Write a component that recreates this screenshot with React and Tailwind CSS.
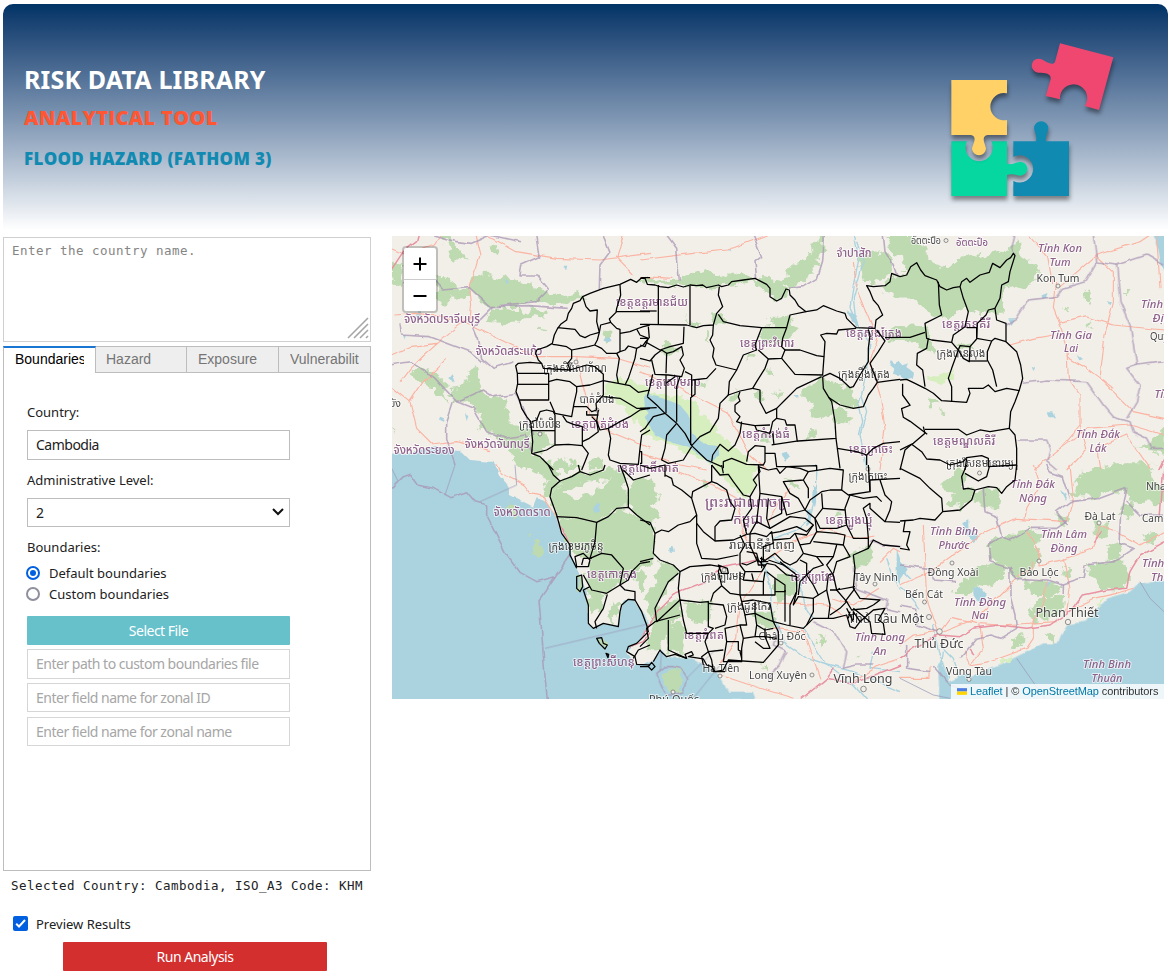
import React from 'react';

// Every map sector is drawn in its own coordinate space, about three units to a pixel.
const sectors = [
  {
    at: 'translate(390 235) scale(.33333)',
    sea: ['M0 656L60 655 100 645 140 640 210 645 240 675 290 680 330 710H0Z'],
    forest: [
      'M0 75L40 95 40 165 0 130Z',
      'M140 125L180 135 210 160 240 165 240 185 190 188 160 210 138 195Z',
      'M240 125L290 110 330 125 370 130 430 160 475 170 520 180 560 175 585 185 550 203 510 208 440 203 380 215 300 220 265 200 270 180 245 165Z',
      'M300 228L350 222 400 230 445 220 475 230 465 245 430 240 390 262 340 265 290 260Z',
      'M205 450L240 430 230 405 262 390 270 410 262 440 275 465 300 490 340 485 350 500 360 560 400 575 420 595 430 655 470 680 490 705H400L370 680 365 640 320 620 290 590 260 575 275 540 240 505 200 500 180 480Z',
      'M55 420L85 395 120 405 180 455 160 465 175 500 150 480 110 445 75 435Z',
      'M425 590L460 590 495 630 460 645 428 655Z',
      'M500 670L540 675 570 705H480Z',
      'M590 680L640 665 650 700H600Z',
      'M150 0H170L240 80 210 70 190 80 175 40Z',
      'M445 278l25 3 5 8 -25 -3Z', 'M640 295l20 -5 8 20 -20 10Z', 'M300 35l20 -5 8 18 -12 6Z', 'M5 580l14 6 -4 12Z',
    ],
    plain: ['M650 450L690 425 760 450 780 440V560L755 590 740 560 700 520 660 490 640 475Z'],
    lake: ['M762 485L780 475V540L765 520Z', 'M640 315l15 -10 8 10 -15 10Z', 'M175 430l10 -12 10 25Z', 'M75 245l18 -18 0 20Z', 'M150 545l12 5 -3 10 -12 -5Z', 'M340 130l14 10 -8 8Z', 'M225 535l10 5 -5 15Z', 'M40 300l10 2 -3 14Z', 'M520 92l12 0 -4 14Z', 'M565 485l10 -5 2 10Z'],
    road: ['M0 40L50 60 130 30 150 0', 'M255 0L270 60 260 95 238 150 245 210 240 250', 'M290 0L380 50 500 70 630 75 780 55', 'M10 240L80 235 160 245 245 270 360 325 440 365 560 365 680 370 780 400', 'M0 360L60 335 140 325 200 275 240 245', 'M140 325L100 360 60 400 30 440', 'M0 450L60 500 80 580 130 630 200 620 300 650', 'M60 500L100 440 170 370', 'M560 365L570 420 590 490 600 540 660 590 780 640', 'M700 0L680 70 730 120'],
    motorway: ['M0 110L40 50 80 20 85 0'],
    admin: ['M130 0L200 20 245 25 300 0 390 20', 'M40 140L120 120 160 165 238 158 300 215 420 212 530 220', 'M440 0L450 65 395 90 390 120 440 120 475 165 440 200 330 212', 'M640 0L660 50 630 90 628 160', 'M310 215L250 275 265 310 275 370 310 400 370 380', 'M30 265L35 300 120 305 160 320 240 350 275 380', 'M0 390L60 380 130 425 200 500 280 465 310 485 380 475', 'M190 500L170 560 170 610 195 690', 'M200 500L250 520 290 590 350 610 405 600 425 650', 'M380 475L410 545 428 600'],
    dist: [
      'M780 128L755 128 740 142 722 133 690 148 640 160 600 175 578 185 570 197 550 205 545 220 535 235 530 255 512 268 503 280 493 300 487 325 470 335 440 345 437 355 445 375 455 385 420 382 385 385 377 392 382 415 383 445 378 470 388 495 395 520 410 545 422 560 425 590 428 620 425 655 450 665 475 690 490 705',
      'M578 185L588 215 600 228 622 225 620 260 628 292 600 300 585 308 570 302 555 283 503 278',
      'M690 150L692 180 680 220 678 232 658 252 662 262 632 270 628 292', 'M678 230H780', 'M662 262L680 280 690 283V350', 'M780 270L760 275 740 282 720 290 690 295',
      'M740 282L750 300 775 310 760 330 740 340 735 370 715 430 705 450', 'M628 292L622 315 614 330 595 335 570 340 545 345 530 335 500 330 487 328', 'M614 330L635 340 650 355 680 355 690 350 705 345 715 333 740 340', 'M680 355L688 370 685 390 680 420 685 445', 'M545 345V370L533 385 540 405 590 390 615 395 640 418V480L618 505 620 525 605 530 590 515 550 515',
      'M455 385L460 400 540 405', 'M382 415H476V495H390', 'M383 448H476', 'M476 440L500 433 540 440 560 455 560 470 552 505 545 545 495 535 480 500', 'M560 455L600 450 640 437 685 445 720 452 745 472 780 465', 'M590 528V540H625', 'M425 560L440 555 450 530 470 525 490 530 495 540V630L470 645 430 655', 'M425 587H495', 'M495 630L535 628 577 632 577 575 550 568 530 560 518 542', 'M577 620L598 610 625 590 620 560 605 545', 'M625 525L620 560 630 585 655 580 690 560 720 545 750 525 780 520', 'M655 580L662 610 655 660 660 675 690 685 745 688 750 640 755 600 780 585', 'M577 632L595 655 585 680 575 705', 'M640 485L690 490 740 520 780 520',
    ],
  },
  {
    at: 'translate(640 235) scale(.33333)',
    sea: [],
    forest: [
      'M-10 135L15 125 60 135 120 130 160 115 200 100 230 130 270 115 350 130 420 140 440 165 430 190 405 198 385 175 340 140 200 160 30 148 -10 138Z',
      'M445 100L470 85 500 70 520 20 550 0V40L535 90 500 130 450 160 420 140 450 130Z',
      'M390 250L450 240 470 285 440 320 380 325 355 310 365 280 400 275Z',
      'M490 460L545 430 600 445 640 470 650 500 640 520 600 515 580 500 578 520 620 530 640 550 620 565 590 575 580 540 530 550 510 540 515 500 490 490Z',
      'M55 345L80 320 100 335 125 345 80 365Z',
      'M140 240L150 262 180 268 150 275Z', 'M265 480L295 465 305 490 270 500Z', 'M215 240L240 235 260 265 225 265Z', 'M165 440L200 440 190 460 165 455Z', 'M340 475L365 465 375 500 360 510Z', 'M330 350L345 360 325 380Z', 'M400 475l25 -6 6 10 -25 8Z', 'M505 590l25 -5 -5 20 -18 15Z', 'M195 290l12 5 0 25 -10 -5Z', 'M385 405l14 2 -8 14Z', 'M365 600l30 5 -5 12 -30 -4Z',
    ],
    plain: ['M-5 465L60 480 120 490 150 495 200 550 240 590 280 640 310 660 330 705H240L200 680 100 630 20 600 -5 560Z'],
    lake: ['M15 478L70 490 120 510 145 540 160 600 190 625 235 630 238 660 210 685 165 650 150 640 100 625 50 600 10 550 30 530Z', 'M752 375l12 10 14 -8 12 14 18 -6 -6 14 20 14 -4 16 -26 4 -14 -12 -22 -4 4 -16 -12 -10Z', 'M425 655l15 -5 10 20 -12 10Z', 'M260 45l12 -4 2 8Z', 'M620 225l30 20 10 30 -20 -10Z', 'M460 480l12 0 0 10Z'],
    road: ['M0 75L160 55 260 45 380 0', 'M0 410L80 440 180 490 260 530 300 600 330 660 380 705', 'M0 655L120 690 200 705', 'M640 80L650 160 690 260 710 310 690 380 720 480 735 580 720 705', 'M0 125L100 130'],
    motorway: [],
    river: ['M640 0L655 80 640 150 630 220 660 280 690 320 680 400 665 480 680 530 660 600 680 700', 'M650 20L670 80 640 190 650 280', 'M665 480L655 510 665 560 655 600'],
    admin: ['M550 0L545 80 530 130 490 155 450 160', 'M80 0L110 40 118 140', 'M340 0L365 65 345 80 350 130', 'M730 0L735 50 760 90 770 120'],
    dist: [
      'M0 130L15 130 22 148 45 150 60 155 85 158 110 150 130 156 150 150 170 152 188 150 200 158 235 150 245 155 265 150 275 140 310 135 345 130 380 148 390 160 390 185 410 198 425 190 438 162 448 165 450 180 465 195 475 212 498 230 530 225 550 212 590 228 615 235 620 250 648 278 705 280 708 255 728 240 715 212 700 195 690 170 680 152 700 155 735 152 750 140 755 115 780 125',
      'M55 150V268', 'M150 152V270', 'M0 268L140 270 170 278 190 272 220 270 230 235 248 215 235 180 238 155', 'M0 228H50', 'M235 238L250 260 300 272 365 278 440 278 450 240 498 230', 'M220 270L218 300 210 315 222 340 218 365 228 390 290 405 310 360 350 345 345 330 365 278', 'M440 278L428 310 425 335 435 345 425 370 385 372 355 345', 'M435 345L480 345 530 362 552 365 548 420 465 418 450 400 425 370', 'M552 365L555 320 542 300 560 295 590 297 595 285 648 280', 'M385 372L375 400 350 440 338 460 360 465 360 500 378 535 410 520 435 495 470 460 545 425', 'M290 405L268 440 265 480 300 468 338 460', 'M265 480L240 505 235 550 210 590 180 605 155 632', 'M300 470L295 485 300 498 285 510 285 530 300 545 290 560 305 565 345 572 390 570', 'M548 425L550 460 565 485 575 500 585 560 588 610 475 618 395 630', 'M548 425L570 415 600 430 630 458 640 455 660 420 685 380 685 340 690 300 685 283', 'M565 487L600 510 640 520 670 515 685 480 700 460 712 442 690 385 715 350 735 318 710 285', 'M735 308L780 307', 'M712 442L750 437 780 433', 'M0 310L25 310 15 335 0 330', 'M25 275L28 310', 'M15 320L60 345 90 335 130 325 132 275', 'M0 370L30 378 45 360 65 345 80 355 78 415', 'M80 355L100 350 125 335 130 360 120 375 133 400 125 425 85 420 45 418 35 375', 'M135 410L155 420 155 485', 'M165 435V478L152 488V630', 'M157 435L200 430 228 400', 'M120 425L110 455V560', 'M78 420V535', 'M38 418L30 455 22 485', 'M78 445L105 425', 'M22 485L50 510 75 535 110 565 135 595 155 632 200 675 245 695', 'M0 520L50 518', 'M75 535L40 545 15 580 0 590', 'M110 565L80 600 75 640 65 675 85 685 130 675 155 635', 'M215 680L218 660 240 628 265 648 285 630 300 595 305 560', 'M345 572L350 585 390 595 398 560 410 550V520', 'M410 550L435 555 440 570 465 570 472 620', 'M398 595L402 630', 'M250 700V680L275 670 320 688 370 690 375 680V635L345 632 325 650 320 680', 'M375 655L405 655 410 695 440 695 530 692V705', 'M588 610L592 640 600 700', 'M592 640L650 650 680 660 680 690', 'M680 660L700 640 730 625 780 620', 'M0 650H5V685H0',
    ],
  },
  {
    at: 'translate(640 236) scale(.34194)',
    sea: [],
    forest: [
      'M720 0H790L830 30 850 80 900 90 960 60 1040 50 1090 30 1110 0 1115 60 1165 90 1155 130 1110 155 1080 135 1055 210 1000 235 950 210 885 240 840 225 800 180 745 180 700 150 740 115 780 110 765 60 730 40Z',
      'M640 60L680 45 740 60 735 110 690 140 650 130Z',
      'M720 290L760 260 845 265 860 345 820 320 790 305 720 302Z',
      'M1035 195l20 8 0 25 -20 -10Z', 'M920 315l40 0 15 12 -40 10Z',
    ],
    dist: ['M768 432V465L790 495 765 505 770 530 790 542 840 580'],
  },
  {
    at: 'translate(900 235) scale(.33333)',
    sea: ['M755 0L775 40 782 80 800 130V0Z'],
    forest: ['M550 185l12 -25 12 30 -10 18Z', 'M560 270l15 -12 -8 25 -12 5Z', 'M710 640L750 620 800 570V660L740 650Z', 'M85 495l25 -3 12 15 -30 5Z', 'M110 525l20 5 0 12Z', 'M490 210l10 0 0 12 -10 0Z', 'M672 168l16 0 -4 8Z'],
    plain: ['M80 420l80 -5 10 20 -75 8Z'],
    lake: ['M440 535l20 0 8 15 -20 0Z', 'M395 395l10 5 -5 8Z', 'M325 250l20 0 -10 20Z', 'M620 195l15 5 -5 10Z', 'M425 180l20 -6 -4 14 -14 4Z', 'M530 360l16 12 -8 4Z'],
    road: ['M470 140L460 220 480 270 500 330 505 430 540 480 540 570 480 640 400 705', 'M330 330L400 310 460 300', 'M480 265L560 245 640 270 792 285', 'M585 60L640 110 640 200 615 300 600 430 640 470 700 530 792 550', 'M385 0L440 65 455 150', 'M480 640L560 580 690 570 792 600', 'M500 365L560 400 640 460', 'M770 0L780 160', 'M480 155L590 60 720 20 750 0', 'M540 570L560 640 500 705', 'M600 705L590 640 680 600 750 700'],
    motorway: ['M775 705L792 670'],
    admin: ['M345 0L335 40 345 60', 'M320 270L350 250 385 195 470 185 490 160 555 140 590 80 580 0', 'M590 80L650 90 740 60 792 90', 'M650 90L660 200 690 270 710 390 792 380', 'M368 445L440 435 560 440 610 510 640 545 690 560 700 590 740 610 755 640 792 640', 'M710 390L680 400 720 450 710 500 680 550', 'M350 615L440 615 450 640 440 680 470 705'],
    dist: [
      'M0 125L20 120 32 95 50 83 62 105 75 122 110 135 120 155 140 165 160 158 180 155 185 140 200 130 210 142 240 120 268 112 278 85 300 98 320 75 332 68 340 55 345 62 330 110 325 140 305 150 300 190 285 220 290 255 318 265V320L350 350 362 390 368 430 358 465 345 500 332 530 328 580 345 600 350 640V705',
      'M115 140L118 210 125 240 75 265 80 310 95 315 155 322 160 300 195 275 205 230 190 190 180 155', 'M0 307L30 307 75 292', 'M85 310L80 340 52 355 50 390 68 405 75 455', 'M0 435L20 433 45 445 75 460 100 475 125 497 200 502 210 475 205 460 250 460 265 450 285 470 320 460 358 467', 'M285 220L265 225 258 240 232 265 230 310 275 318 285 310 318 320', 'M200 278H230V310', 'M275 318L262 350 262 375 278 405 290 455', 'M155 322L175 345 155 400 145 430 155 455V500', 'M175 345L180 332 210 335 208 380 190 370Z', 'M210 378H262', 'M210 335L230 312', 'M70 575L75 595 40 625 0 645', 'M75 583H175L200 600 240 585 270 590 328 580', 'M35 628L65 650 80 672 120 675 150 690 190 680 200 668 245 662 265 670V695L350 690', 'M35 628L15 645 0 705', 'M200 670L195 705',
    ],
  },
  {
    at: 'translate(390 465) scale(.33333)',
    sea: ['M0 -10H310L330 35 355 65 360 90 430 125 440 100 470 110 495 150 515 205 540 240 545 275 570 325 585 370 595 420V475L610 490 640 475 685 485 700 405 730 405 755 440 775 485 740 535 710 560 735 598 790 605V705H0Z'],
    forest: ['M435 0L500 0 510 48 480 95 460 85 470 40 430 20Z', 'M510 50L570 20 640 15 700 5 715 125 670 132 620 172 500 152 480 95Z', 'M500 155L620 172 690 130 740 150 790 180V290L725 320 700 350 650 385 605 375 590 340 600 300 560 265 530 230Z', 'M590 370L650 388 640 430 600 450Z', 'M665 410l30 5 -30 60 -10 -20Z', 'M432 235l12 -5 8 40 -6 20 -14 -25Z', 'M350 120l20 -5 5 20 20 20 -25 5Z', 'M560 335L575 332 578 365 570 380 558 370Z', 'M620 520L635 518 652 540 645 552 628 535Z', 'M740 320l20 -5 5 60 -25 0Z', 'M715 50L790 30V180L715 125Z', 'M415 212l14 -6 -4 8Z'],
    clear: ['M520 80L590 50 660 45 610 90 555 100Z'],
    plain: [],
    lake: ['M610 130l15 -15 5 25 -15 5Z'],
    road: ['M320 0L335 25 400 60 420 85 460 95 500 155'],
    motorway: ['M780 500L760 530 720 545', 'M500 155L520 200 540 240'],
    admin: ['M5 70L40 35 62 28 85 60 130 70 180 98 230 80 255 110 290 120 290 150 345 260 390 322 440 350 495 335 540 270', 'M495 335L447 405 455 500 462 600 472 705'],
    thin: ['M375 0L380 60 270 110', 'M195 0L165 90', 'M465 550L770 478', 'M25 50L5 10'],
    dist: [
      'M475 0L490 30 510 48 485 70 480 95 500 150 515 205 540 240 540 270 560 310', 'M560 335L575 330 578 365 570 380 560 370Z', 'M510 48L545 35 570 20 600 30 640 15 645 0', 'M570 20L565 0', 'M500 155L560 158 620 172 655 155 680 130 715 127 740 150 780 180', 'M690 0L705 40 715 70V127', 'M700 15L730 45 780 30', 'M620 172L615 230 600 280', 'M555 275L580 265 600 285 595 305 560 305Z', 'M575 300L580 280 605 280', 'M600 280L635 265 665 270 700 310 690 360 650 385 605 375 580 330', 'M780 290L750 295 725 320 715 345 690 360 705 375 735 380V405L715 403 695 420 690 440 685 485 640 475 610 490 595 475V420L580 375 600 365', 'M735 405L755 440 770 480 775 500 740 535 715 545 710 560 735 575 740 598 780 600', 'M652 388L640 430 615 470 620 490', 'M620 520L635 518 640 535 652 540 645 552 628 535Z', 'M648 565l8 3 -2 10Z', 'M780 540L745 555 730 580',
    ],
  },
  {
    at: 'translate(640 465) scale(.33333)',
    sea: ['M0 605L35 590 65 555 80 575 140 580 190 600 225 615 250 650 265 680 335 680 345 705H0Z', 'M-5 425L15 450 25 480 0 515Z'],
    forest: ['M-5 70L60 90 40 120 60 160 30 172 -5 165Z', 'M-5 170L40 180 45 275 -5 290Z', 'M55 290L110 305 115 325 65 390 50 430 25 480 30 430 10 400 50 350Z', 'M45 430L115 405 125 450 80 500 60 555 20 550 25 510Z', 'M80 490L130 470 140 505 130 570 85 560Z', 'M130 410L215 410 210 480 150 470Z', 'M405 330H470V400L435 390 415 430 405 380Z', 'M340 440L400 440 410 490 350 480Z', 'M625 270L685 240 700 260 670 310 640 300Z', 'M80 620L110 605 130 640 125 670 90 690 70 655Z', 'M530 520l25 -8 -15 30Z', 'M440 40l15 0 20 25 -25 0Z', 'M360 600l15 -5 0 25Z', 'M185 45l16 5 -10 18Z', 'M580 145l30 -10 -6 24Z', 'M640 570l14 2 -6 10Z'],
    clear: [],
    plain: ['M205 -5H340L345 50 350 60 320 100 270 60Z'],
    lake: ['M520 60l15 20 -10 50 -10 -20Z', 'M500 140l12 -5 0 40 -10 10Z', 'M770 250l10 30v80l-10 -20Z', 'M90 250l10 -5 5 15 -12 0Z'],
    river: ['M365 290L400 275 450 310 480 330 490 410 520 460', 'M370 295L390 360 395 440 430 530 500 580 560 600 640 660 680 705', 'M490 490L560 600 640 620 780 680', 'M530 0L530 80 510 160 480 190 400 220', 'M740 280L770 360 780 380', 'M700 560L690 610 780 620'],
    road: ['M60 0L220 60 290 100 310 200 350 280', 'M370 290L440 240 560 190 650 220 700 210', 'M365 320L300 420 290 520 240 600', 'M380 180L420 110 450 70', 'M400 490L490 500 540 640', 'M580 400L640 420 720 370', 'M240 630L330 660 460 700', 'M400 410L560 420 620 460', 'M640 650L720 600 780 580', 'M720 290L760 250 780 260'],
    motorway: ['M0 520L50 440 100 390 190 355 240 310 350 285', 'M480 705L560 640 580 610', 'M560 640L640 655 780 600'],
    admin: ['M690 230L700 225 730 240 780 245', 'M415 485L400 540 440 560 420 600 380 640', 'M520 470L580 500 620 560 610 610 650 600 700 600', 'M50 625L75 605 100 605 120 610 140 640 130 680 100 690 80 690 65 665Z', 'M640 310L650 370 740 405 735 430 780 440'],
    thin: ['M140 640L225 555', 'M65 560L60 620', 'M240 600L200 650 160 700'],
    dist: [
      'M0 165L30 172 45 205 65 195 85 200 115 180 150 170 170 150 155 100 158 80 215 50 215 0', 'M45 205L40 265 60 285 100 300 120 320 150 305 210 300 240 305', 'M170 150V235L185 280 230 283 295 270', 'M170 175L190 200 225 228 280 225 320 208', 'M225 228V185L240 168 275 165 285 130 270 110 260 75 230 55 215 50', 'M120 320L115 370 120 405 50 470 45 430 65 390 85 350 115 325', 'M0 545L25 520 20 490 45 470 120 450', 'M120 405L180 412 205 410V485L220 490 205 505 140 505 130 465Z', 'M85 465V555L140 580', 'M205 415L250 420 260 455 255 480 225 490', 'M212 410L220 385 245 362 270 385 300 390', 'M240 305L235 320 245 362', 'M0 290L40 280', 'M75 30L95 40 100 60 125 75 155 100', 'M0 0L30 10 75 0 75 35',
      'M215 0L240 30 265 28 280 50 310 90 330 95 335 130 310 165 320 208', 'M245 0L250 25', 'M330 95L350 60 340 45 360 20 355 0', 'M355 5L385 15 410 10 420 25 440 5 480 10 505 20 490 45 430 50 450 85 475 100 495 135 440 150 425 95 360 85Z', 'M505 20L570 10 610 15 605 75 570 75 545 80 510 105 495 135', 'M490 45L505 70 505 100', 'M605 75L625 90 690 80 685 0', 'M690 80L690 45 780 40', 'M720 45L735 90 755 110 750 135 735 170 780 172', 'M735 170L690 130 690 115 670 130 680 160 685 220', 'M630 90L615 130 620 180 590 190 540 190 525 160 548 130 545 85', 'M548 130L615 135', 'M630 90L670 100 710 95 725 110',
      'M360 85L350 170 330 205', 'M385 100L380 160 390 190', 'M425 95L425 145 385 165', 'M350 170L390 190 450 155 495 160 520 180 500 200 470 185 420 200 390 205', 'M495 135L525 160', 'M320 208L345 205 380 215 395 200 400 235 370 245 370 290', 'M330 205L330 240 350 285', 'M400 225L450 220 465 205 500 210 520 180', 'M465 205L480 240 510 235 530 200 590 205 615 210 610 240 520 230', 'M530 200L525 160', 'M480 240L490 265 470 290 450 300 430 290 405 265 370 290', 'M490 265L530 275 580 275 590 240', 'M530 275L550 300 520 310 500 330 500 295 480 285', 'M580 275L560 300 580 330 590 375 645 365', 'M620 180L640 220 685 220 685 250', 'M610 240L630 275 590 290 580 325',
      'M300 210L315 240 300 265 300 300 315 320 365 320 380 295', 'M320 260L350 265 355 285 320 300 305 295', 'M350 275L355 300 378 300M360 280L375 285M352 290H385M365 275V310M355 285L372 305', 'M300 320V390L305 410 340 405 390 415', 'M315 320L310 345 370 350 370 390H300', 'M335 325L340 345', 'M370 350L375 320M370 390L405 390 405 340 380 320', 'M405 340L435 360V380H405', 'M435 375L435 470', 'M380 295L405 300 440 330 470 335 470 380 450 420 450 480', 'M420 290L470 330M385 285L430 300 465 325', 'M470 380L460 420 475 395 520 400 520 440 500 480', 'M500 330L480 350 475 390', 'M500 330L520 360 535 390 560 375 565 330 580 325', 'M520 400L535 390', 'M560 375L570 420 565 460', 'M570 375L590 375 600 370', 'M590 375L620 410 600 430 570 450', 'M620 410L635 435 680 430 700 420',
      'M235 300L262 310 265 325 245 325Z', 'M305 410L315 450 345 445 345 410', 'M390 415L400 470 375 460 345 445', 'M345 445L350 480 375 495 400 490', 'M315 450L320 480 300 480 310 520 345 515 350 480', 'M300 480L255 490 260 530 250 590 305 590V550L310 520', 'M205 505L195 530 205 560 250 555', 'M260 530L295 530 295 555 305 560', 'M345 515L375 515 390 550 370 550 345 530', 'M375 490L375 515 410 520', 'M305 580L300 560', 'M190 600L185 575 205 560', 'M205 560L215 585 220 620 255 620',
      'M0 605L25 605 35 592 45 605 35 615 25 605M40 590L60 555 65 562 80 575 105 568 140 580 135 568 155 560 160 570 145 575 190 582 200 600 215 605 225 620 250 615 265 585 370 592 385 575 415 540 415 500 400 470 440 480 490 490 520 460 580 460 620 450 630 485 645 490 660 470 640 440 640 465M640 430L690 470 695 505 735 508 730 475 715 465 735 430 700 435 660 470', 'M700 420L720 405 660 400 640 370 645 310 640 270 685 250 700 225 730 240 780 245', 'M645 370L615 410', 'M620 430L640 470M630 440L625 460',
    ],
  },
  {
    at: 'translate(900 465) scale(.33333)',
    sea: ['M800 340L740 355 720 350 690 380 620 400 600 420 560 470 500 478 480 510 470 535 430 535 350 575 300 600 215 635 205 625 150 650 125 590 115 600 118 705H800Z'],
    forest: ['M130 45L185 10 200 30 190 70 225 75 210 100 180 135 150 110 165 90 130 75Z', 'M225 75L290 70 305 85 300 130 250 125 215 105Z', 'M550 20L640 -5H800V110L700 115 670 85 620 80 580 100 520 95 530 50Z', 'M270 230L340 205 390 190 430 205 400 240 420 270 390 325 350 345 315 300 265 275Z', 'M160 390L190 345 230 310 300 290 320 310 290 350 230 375 195 390Z', 'M555 310L600 290 670 290 690 340 670 375 600 370 580 340Z', 'M365 345L460 350 490 370 450 390 390 390Z', 'M400 420L430 395 490 385 485 440 455 460 400 470 390 440Z', 'M335 520L365 500 380 525 345 555Z', 'M625 240L670 230 650 290 620 280Z', 'M675 120L700 110 690 160 665 150Z', 'M730 210L770 200 760 240 735 230Z', 'M440 500l25 10 5 25 -15 0Z', 'M590 175l30 -5 10 30 -20 25 -20 -10Z', 'M485 310l20 0 10 30 -20 0Z', 'M470 145l30 10 0 35 -20 -15Z'],
    clear: ['M745 -5H800V60L760 50Z'],
    plain: ['M590 415l25 -15 -20 30Z', 'M305 590l30 -10 0 10 -30 10Z'],
    lake: ['M220 370l25 0 15 20 -15 25 -15 -10 -10 -15Z', 'M190 175l15 -10 0 20 30 30 -10 20 -25 -25Z', 'M480 75l20 15 -5 15Z', 'M0 290l20 20 -20 30Z', 'M440 350l10 0 -8 20Z'],
    river: ['M0 310L30 340', 'M100 480L115 560 150 640', 'M120 540L160 580 180 640', 'M130 560L120 640 160 700', 'M60 430L20 380 0 370'],
    road: ['M70 180L75 300 80 400 115 500', 'M0 360L90 320 160 270 260 200 350 160 500 170 520 100 510 0', 'M375 160L380 130 420 60 400 0', 'M380 200L420 270 420 300 500 280 580 250 600 180', 'M600 180L650 200 720 240 792 200', 'M490 280L510 370 500 440', 'M400 290L400 310 360 330 300 390 230 460 130 500', 'M440 350L430 420 400 460 400 520 380 550 270 590 210 600 190 560', 'M120 500L150 460 230 475 300 480 470 470', 'M110 500L40 510 0 540', 'M520 430L580 400 650 385 700 370', 'M240 480L250 550 210 600', 'M0 640H90V600'],
    motorway: ['M0 580L40 550 115 510', 'M115 510L180 515 220 490 300 480 380 490 450 480 520 430 550 390 620 375 680 370 690 320 720 270 792 230', 'M583 230L605 200', 'M207 555l15 15', 'M792 0L780 160'],
    admin: ['M250 75L255 140 290 155 305 215 265 240 270 290 330 310 350 340 440 345 490 360 550 340 555 300 640 290 700 250 660 235 665 150 680 70 600 100 510 110 470 140 500 180', 'M305 215L330 225 390 190 470 190 500 170', 'M440 0L450 20 490 35 510 100', 'M680 110L720 150 792 150', 'M330 310L330 390 345 450 350 490 300 520 270 510 230 520 180 580', 'M0 300L90 310 100 345 165 350', 'M0 420L50 430 50 480 115 500', 'M20 540L20 610 90 620', 'M490 360L490 390', 'M100 600L150 660 200 680'],
    thin: ['M720 350L750 400 792 440', 'M350 580L435 702', 'M0 640L100 690 150 700'],
    dist: ['M350 0L345 45 320 65 305 85 290 68 265 65 225 75 205 70 190 72 185 35 200 0', 'M195 25L235 48 260 35 268 5', 'M225 75L215 105 180 135 128 140 105 165 60 160 40 165 0 168', 'M0 10L60 40 90 70 125 100 128 140', 'M15 168L10 200 30 200 20 240 28 255 0 250'],
  },
];

// [centre x, baseline, size, text, kind, width]: p = province, i = province in italics, c = town
const labels = [
  [442, 323, 12, 'จังหวัดปราจีนบุรี', 'p', 76], [509, 355, 12, 'จังหวัดสระแก้ว', 'p', 67], [424, 454, 12, 'จังหวัดระยอง', 'p', 61], [497, 448, 12, 'จังหวัดจันทบุรี', 'p', 65], [522, 516, 12, 'จังหวัดตราด', 'p', 57],
  [395, 407, 10, 'ยัง', 'c', 12], [854, 257, 12, 'จำปาสัก', 'p', 35], [926, 244, 10, 'อัตตะปือ', 'c', 30], [972, 246, 11, 'อัตตะปือ', 'p', 32],
  [652, 306, 12, 'ខេត្តឧត្តរមានជ័យ', 'p', 72], [767, 347, 12, 'ខេត្តព្រះវិហារ', 'p', 54], [874, 337, 12, 'ខេត្តស្ទឹងត្រែង', 'p', 56], [864, 378, 11, 'ក្រុងស្ទឹងត្រែង', 'c', 52], [966, 328, 12, 'ខេត្តរតនគិរី', 'p', 48], [961, 357, 11, 'ក្រុងបានលុង', 'c', 49],
  [575, 372, 11, 'ក្រុងសិរីសោភ័ណ', 'c', 64], [597, 403, 11, 'បាត់ដំបង', 'c', 35], [600, 428, 12, 'ខេត្តបាត់ដំបង', 'p', 58], [540, 428, 11, 'ក្រុងប៉ៃលិន', 'c', 42], [673, 386, 12, 'ខេត្តសៀមរាប', 'p', 56], [648, 472, 12, 'ខេត្តពោធិ៍សាត់', 'p', 62],
  [766, 438, 12, 'ខេត្តកំពង់ធំ', 'p', 48], [871, 453, 12, 'ខេត្តក្រចេះ', 'p', 44], [868, 480, 11, 'ក្រុងក្រចេះ', 'c', 39], [964, 445, 12, 'ខេត្តមណ្ឌលគិរី', 'p', 62], [980, 467, 11, 'ក្រុងសែនមនោរម្យ', 'c', 68],
  [748, 507, 14, 'ព្រះរាជាណាចក្រ', 'p', 86], [748, 524, 14, 'កម្ពុជា', 'p', 30], [762, 549, 12, 'រាជធានីភ្នំពេញ', 'c', 66], [849, 524, 12, 'ខេត្តត្បូងឃ្មុំ', 'p', 47], [723, 580, 11, 'ក្រុងច្បារមន', 'c', 44], [813, 581, 12, 'ខេត្តព្រៃវែង', 'p', 45], [749, 610, 11, 'ក្រុងដូនកែវ', 'c', 44], [704, 639, 12, 'ខេត្តកំពត', 'p', 40],
  [576, 550, 11, 'ក្រុងខេមរភូមិន្ទ', 'c', 55], [612, 578, 12, 'ខេត្តកោះកុង', 'p', 50], [604, 666, 12, 'ខេត្តព្រះសីហនុ', 'p', 62],
  [1060, 252, 11, 'Tỉnh Kon', 'i', 44], [1060, 266, 11, 'Tum', 'i', 21], [1058, 281.5, 10.5, 'Kon Tum', 'c', 43], [1071, 339, 11, 'Tỉnh Gia', 'i', 42], [1071, 352, 11, 'Lai', 'i', 14], [1165, 308, 11, 'Tỉnh Bình', 'i', 48], [1165, 322, 11, 'Định', 'i', 25], [1173, 340, 10.5, 'Quy Nhơn', 'c', 46], [1098, 438, 11, 'Tỉnh Đắk', 'i', 44], [1098, 452, 11, 'Lắk', 'i', 17], [1177, 398, 11, 'Tỉnh Phú', 'i', 45],
  [1033, 488, 11, 'Tỉnh Đắk', 'i', 44], [1033, 502, 11, 'Nông', 'i', 28], [954, 535, 11, 'Tỉnh Bình', 'i', 48], [954, 549, 11, 'Phước', 'i', 31], [1064, 538, 11, 'Tỉnh Lâm', 'i', 46], [1064, 552, 11, 'Đồng', 'i', 27], [1100, 520, 10.5, 'Đà Lạt', 'c', 31], [1171, 490, 10.5, 'Nha Trang', 'c', 50], [1166, 522, 10.5, 'Cam Ranh', 'c', 48],
  [953, 576, 10.5, 'Đồng Xoài', 'c', 51], [1039, 575.5, 10.5, 'Bảo Lộc', 'c', 39], [924, 598, 10.5, 'Bến Cát', 'c', 38], [980, 605.5, 11, 'Tỉnh Đồng', 'i', 52], [980, 619, 11, 'Nai', 'i', 17], [1067, 616.5, 12.5, 'Phan Thiết', 'c', 63], [886, 623, 12.5, 'Thủ Dầu Một', 'c', 76], [939, 648, 12.5, 'Thủ Đức', 'c', 49], [876, 581, 10.5, 'Tây Ninh', 'c', 44], [880, 641, 11, 'Tỉnh Long', 'i', 50], [880, 655, 11, 'An', 'i', 13],
  [969, 675, 10.5, 'Vũng Tàu', 'c', 46], [1107, 668, 11, 'Tỉnh Bình', 'i', 48], [1107, 682, 11, 'Thuận', 'i', 31], [782, 640, 10.5, 'Châu Đốc', 'c', 47], [721, 672, 10.5, 'Hà Tiên', 'c', 37], [778, 679, 10.5, 'Long Xuyên', 'c', 58], [863, 683, 12.5, 'Vĩnh Long', 'c', 59], [674, 703, 10.5, 'Phú Quốc', 'c', 50], [1167, 567, 11, 'Tỉnh Ninh', 'i', 50], [1167, 581, 11, 'Thuận', 'i', 32],
];

const towns = [[946, 240.5, 2], [1058, 286, 2], [576, 362, 2], [597, 410, 2], [540, 434, 2], [979.5, 473, 2], [1099, 523, 2], [1039, 561, 2], [952, 563, 2], [924.5, 602, 2], [1068, 622, 2.7], [929, 617, 2.5], [939.5, 631.5, 2.8], [969, 679.5, 2], [875, 584, 2], [812, 675, 2], [863.5, 689, 2.8], [720, 676, 2], [673, 692, 2], [781, 643, 2], [724, 570, 2], [864, 368, 2], [868, 469, 2]];

function Layer({ name, ...props }) {
  return (
    <g {...props}>
      {sectors.map((s) => (
        <g key={s.at} transform={s.at}>
          {(s[name] || []).map((d) => <path key={d} d={d} />)}
        </g>
      ))}
    </g>
  );
}

function MapDrawing() {
  return (
    <svg className="block h-full w-full" viewBox="392 236 772 463" strokeLinejoin="round">
      <defs>
        <filter id="rough" filterUnits="userSpaceOnUse" x="380" y="226" width="796" height="483">
          <feTurbulence type="fractalNoise" baseFrequency=".11" numOctaves="3" seed="4" />
          <feDisplacementMap in="SourceGraphic" scale="13" xChannelSelector="R" yChannelSelector="G" />
        </filter>
        <filter id="wobble" filterUnits="userSpaceOnUse" x="380" y="226" width="796" height="483">
          <feTurbulence type="fractalNoise" baseFrequency=".07" numOctaves="2" seed="9" />
          <feDisplacementMap in="SourceGraphic" scale="5" xChannelSelector="R" yChannelSelector="G" />
          <feGaussianBlur stdDeviation=".25" />
        </filter>
      </defs>
      <rect x="392" y="236" width="772" height="463" fill="#f2efe9" />
      <g filter="url(#wobble)">
        <Layer name="sea" fill="#aad3df" />
      </g>
      <g filter="url(#rough)">
        <Layer name="forest" fill="#bedab1" />
        <Layer name="clear" fill="#f2efe9" />
        <Layer name="plain" fill="#d7eebf" />
      </g>
      <g filter="url(#wobble)">
        <Layer name="lake" fill="#aad3df" />
        <Layer name="river" fill="none" stroke="#aad3df" strokeWidth="4" />
        <Layer name="road" fill="none" stroke="#fbb3a2" strokeWidth="3.4" />
        <Layer name="motorway" fill="none" stroke="#e892a2" strokeWidth="4.5" />
        <Layer name="admin" fill="none" stroke="#a995b4" strokeOpacity=".75" strokeWidth="4.8" />
      </g>
      <Layer name="thin" fill="none" stroke="#9c9ab9" strokeOpacity=".75" strokeWidth="3" />
      <g fill="#f2efe9" stroke="#777" strokeWidth=".8">
        {towns.map(([x, y, r]) => <circle key={`${x}-${y}`} cx={x} cy={y} r={r} />)}
      </g>
      <g textAnchor="middle" fontFamily="'Noto Sans', 'Noto Sans Khmer', 'Noto Sans Thai', 'DejaVu Sans', sans-serif" stroke="#ffffff" strokeOpacity=".65" strokeWidth="2" paintOrder="stroke">
        {labels.map(([x, y, size, text, kind, width]) => (
          <text key={`${x}-${y}`} x={x} y={y} fontSize={size} fontWeight={kind === 'p' || kind === 'i' ? 500 : 400} textLength={width} lengthAdjust="spacingAndGlyphs" fill={kind === 'c' ? '#444444' : '#8d618b'} fontStyle={kind === 'i' ? 'italic' : 'normal'}>{text}</text>
        ))}
      </g>
      <Layer name="dist" fill="none" stroke="#000000" strokeWidth="3.8" />
    </svg>
  );
}

function PuzzleLogo() {
  return (
    <svg className="-mr-[2px] h-[210px] w-[240px]" viewBox="0 0 720 630">
      <defs>
        <filter id="shade" x="-20%" y="-20%" width="150%" height="150%" colorInterpolationFilters="sRGB">
          <feDropShadow dx="2" dy="12" stdDeviation="7" floodColor="#000" floodOpacity=".42" />
        </filter>
      </defs>
      <path filter="url(#shade)" fill="#118ab2" d="M250 364H318C322 350 315 340 312 325A21.5 21.5 0 1 1 355 325C353 340 345 352 348 364H417V528H250V483A41 41 0 1 0 250 410Z" />
      <path filter="url(#shade)" fill="#06d6a0" d="M64 364H111A41 41 0 1 0 184 364H231V430C245 438 258 425 272 425A21 21 0 1 1 270 467C255 463 240 460 231 465V528H64Z" />
      <path filter="url(#shade)" fill="#ffd166" d="M64 180H231V220A41 41 0 1 0 231 300V345H172C152 350 165 370 168 385A21 21 0 1 1 126 385C130 370 143 350 123 345H64Z" />
      <path filter="url(#shade)" fill="#ef476f" d="M390 70L550 112 507 270 464 258A41 41 0 1 0 390 238L347 228 362 178C365 160 345 158 325 158A21 21 0 1 1 335 118C350 128 370 138 375 125Z" />
    </svg>
  );
}

const field = "flex w-[263px] items-center border px-2 pb-px text-[14px] tracking-[-0.5px]";

export default function App() {
  return (
    <div className="h-[978px] w-[1170px] overflow-hidden bg-white pl-[3px] pt-1 font-['Noto_Sans','Open_Sans',sans-serif] text-[13px] text-[#212121]">
      <header className="flex h-[226px] w-[1165px] justify-between rounded-t-[10px] bg-linear-to-b from-[#003366] to-white pl-[21px] font-bold">
        <div className="flex flex-col whitespace-nowrap pt-[56px]">
          <h1 className="h-[39px] text-[25px] leading-[38px] tracking-[0.16px] text-white">RISK DATA LIBRARY</h1>
          <h2 className="h-[38px] font-['Open_Sans'] text-[20px] leading-[38px] font-extrabold tracking-[0.3px] text-[#ff5733]">ANALYTICAL TOOL</h2>
          <h3 className="h-[42px] font-['Open_Sans'] text-[17px] leading-[43px] font-extrabold tracking-[0.3px] text-[#118ab2]">FLOOD HAZARD (FATHOM 3)</h3>
        </div>
        <div className="pt-4"><PuzzleLogo /></div>
      </header>
      <main className="mt-[6px] flex gap-[21px]">
        <section className="w-[368px] shrink-0 pt-px">
          <div className="flex h-[105px] flex-col justify-between border border-[#cfcfcf] font-['DejaVu_Sans_Mono',monospace] text-[12.5px] tracking-[0.475px] text-[#858585]">
            <span className="px-2 pt-[3px] leading-5">Enter the country name.</span>
            <svg className="mb-[1px] h-6 w-6 self-end" viewBox="0 0 24 24" stroke="#a6a6a6" strokeWidth="1.6">
              <path d="M2 22L22 2M8 22L22 8M14 22L22 14M20 22L22 20" />
            </svg>
          </div>
          <div className="mt-1 flex h-[27px] font-['Liberation_Sans',Arial,sans-serif] text-[14px] text-[#757575]">
            <div className="w-[93px] shrink-0 border-t-2 border-r border-l border-t-[#1976d2] border-r-[#bdbdbd] border-l-[#bdbdbd] bg-white pl-[11px] leading-[22px] text-black"><div className="w-[69px] overflow-hidden">Boundaries</div></div>
            <div className="w-[91px] border border-l-0 border-[#bdbdbd] bg-[#eeeeee] pl-[10px] leading-[24px]">Hazard</div>
            <div className="w-[92px] border border-l-0 border-[#bdbdbd] bg-[#eeeeee] pl-[11px] leading-[24px]">Exposure</div>
            <div className="w-[92px] border border-l-0 border-[#bdbdbd] bg-[#eeeeee] pl-[11px] leading-[24px]"><div className="w-[69px] overflow-hidden">Vulnerability</div></div>
          </div>
          <div className="flex h-[498px] flex-col border border-t-0 border-[#bdbdbd] pl-[23px] pt-[28px]">
            <div className="h-[29px] leading-[22px]">Country:</div>
            <div className={`${field} h-[30px] border-[#bdbdbd]`}>Cambodia</div>
            <div className="mt-[9px] h-[29px] leading-[22px]">Administrative Level:</div>
            <div className={`${field} h-[29px] justify-between border-[#bdbdbd] pr-[4px]`}>
              2
              <svg className="h-3 w-[14px]" viewBox="0 0 14 12" fill="none" stroke="#111" strokeWidth="2"><path d="M2 3L7 8L12 3" /></svg>
            </div>
            <div className="mt-[9px] h-[26px] leading-[23px]">Boundaries:</div>
            <div className="flex h-[21px] items-center gap-[9px]">
              <span className="-ml-px flex size-[14px] items-center justify-center rounded-full border-2 border-[#0060df]"><span className="size-[6px] rounded-full bg-[#0060df]" /></span><span className="pt-[3px]">Default boundaries</span>
            </div>
            <div className="flex h-[21px] items-center gap-[9px]"><span className="-ml-px size-[14px] rounded-full border-2 border-[#8f8f9d]" /><span className="pt-[3px]">Custom boundaries</span></div>
            <div className="mt-[12px] flex h-[29px] w-[263px] items-center justify-center rounded-[1px] bg-[#67c1cb] text-[14px] tracking-[-0.5px] text-white">Select File</div>
            <div className={`${field} mt-1 h-[30px] border-[#d6d6d6] text-[#a6a6a6]`}>Enter path to custom boundaries file</div>
            <div className={`${field} mt-1 h-[29px] border-[#d6d6d6] text-[#a6a6a6]`}>Enter field name for zonal ID</div>
            <div className={`${field} mt-[5px] h-[29px] border-[#d6d6d6] text-[#a6a6a6]`}>Enter field name for zonal name</div>
          </div>
          <div className="mt-[5px] h-5 whitespace-nowrap pl-2 font-['DejaVu_Sans_Mono',monospace] text-[12.5px] leading-5 tracking-[0.475px]">Selected Country: Cambodia, ISO_A3 Code: KHM</div>
          <div className="mt-[16px] flex h-[22px] items-center gap-2 pl-[10px]">
            <svg className="size-[15px] rounded-[2px] bg-[#0060df]" viewBox="0 0 15 15" fill="none" stroke="#fff" strokeWidth="2"><path d="M3.2 7.8L6 10.5L12 4" /></svg><span className="pt-[3px]">Preview Results</span>
          </div>
          <div className="mt-[8px] ml-[60px] flex h-[29px] w-[264px] items-center justify-center rounded-[1px] bg-[#d32f2f] text-[14px] tracking-[-0.5px] text-white">Run Analysis</div>
        </section>
        <section className="relative h-[463px] w-[772px] shrink-0 overflow-hidden">
          <MapDrawing />
          <div className="absolute top-[10px] left-[10px] flex h-[67px] w-[36px] flex-col rounded-[4px] border-2 border-black/20 bg-white bg-clip-padding">
            <div className="flex h-8 items-center justify-center border-b border-[#ccc]"><svg className="size-[14px]" viewBox="0 0 14 14" stroke="#000" strokeWidth="2"><path d="M0.5 7H13.5M7 0.5V13.5" /></svg></div>
            <div className="flex h-[31px] items-center justify-center"><svg className="size-[14px]" viewBox="0 0 14 14" stroke="#000" strokeWidth="2"><path d="M0.5 7H13.5" /></svg></div>
          </div>
          <div className="absolute right-0 bottom-0 flex h-[15px] w-[213px] items-center whitespace-nowrap bg-white/80 pl-[6px] font-['Liberation_Sans',Arial,sans-serif] text-[11px] tracking-[-0.08px] text-[#333]">
            <svg className="mr-[3px] h-[7px] w-[10px]" viewBox="0 0 12 8"><path fill="#4c7be1" d="M0 0h12v4H0z" /><path fill="#ffd500" d="M0 4h12v4H0z" /></svg>
            <span className="text-[#0078a8]">Leaflet</span><span className="px-[3px]">|</span>©&nbsp;<span className="text-[#0078a8]">OpenStreetMap</span>&nbsp;contributors
          </div>
        </section>
      </main>
    </div>
  );
}
